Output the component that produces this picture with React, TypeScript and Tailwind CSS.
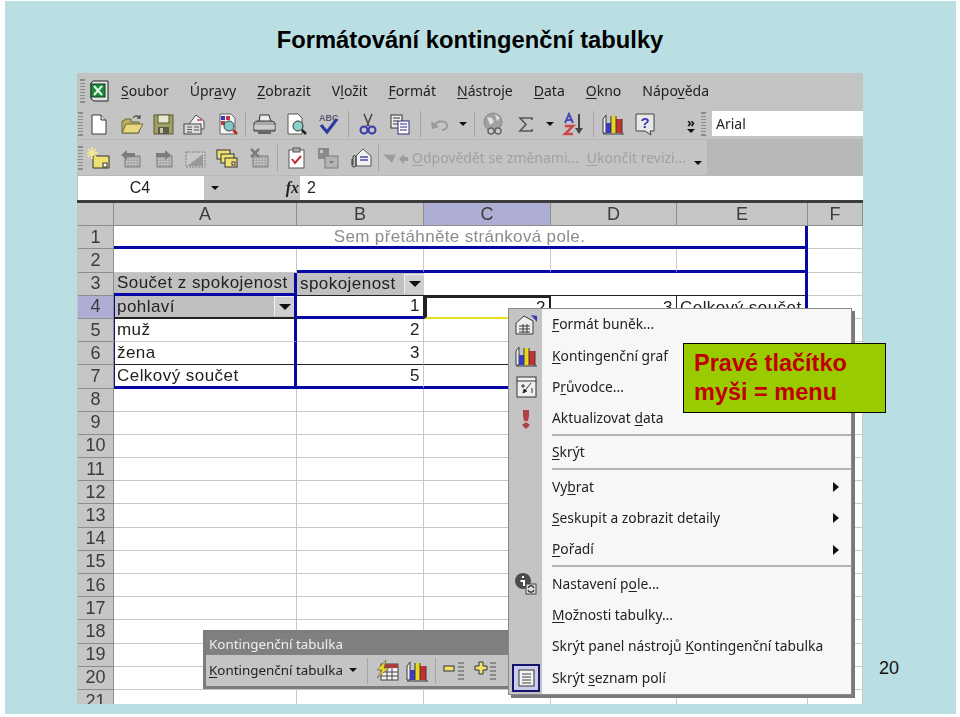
import React from 'react';

const OUT = '#3a3a3a';

// Text with an Alt-key letter: "&" marks the underlined character
function Hot({ text }: { text: string }) {
  const i = text.indexOf('&');
  if (i < 0) return <>{text}</>;
  return (
    <>
      {text.slice(0, i)}
      <u className="underline underline-offset-2">{text[i + 1]}</u>
      {text.slice(i + 2)}
    </>
  );
}

function Ico({ children }: { children: React.ReactNode }) {
  return (
    <svg width="24" height="24" viewBox="0 0 24 24" className="shrink-0">
      {children}
    </svg>
  );
}

const Hatch = () => (
  <>
    <rect x="6" y="10" width="15" height="11" fill="#a8a8a8" stroke="#808080" />
    <path d="M7 13h13M7 15.500h13M7 18h13" stroke="#e0e0e0" strokeDasharray="1.500 1.500" />
  </>
);

const ChartIco = () => (
  <Ico>
    <path d="M2 21V7l3-4v18zM2 22h21" fill="#eee" stroke={OUT} />
    <rect x="5" y="11" width="5" height="10" fill="#3a3ac8" />
    <rect x="10" y="4" width="5" height="17" fill="#e8d820" />
    <rect x="15" y="7" width="6" height="14" fill="#c83030" />
    <path d="M10 4v17M15 4v17M21 7v15" stroke={OUT} />
  </Ico>
);

const icons: Record<string, React.ReactNode> = {
  xls: (
    <Ico>
      <path d="M5 2h15v20H6l-3-2V4z" fill="#e4e4e4" stroke="#202020" />
      <rect x="3" y="5" width="14" height="13" fill="#1a8a3a" stroke="#104020" />
      <path d="M6 7l8 9M14 7l-8 9" stroke="#e8f8e8" strokeWidth="2" />
    </Ico>
  ),
  new: (
    <Ico>
      <path d="M5 3h9l5 5v14H5z" fill="#fff" stroke={OUT} />
      <path d="M14 3v5h5" fill="#ddd" stroke={OUT} />
    </Ico>
  ),
  open: (
    <Ico>
      <path d="M3 21V9h2l1-2h6v3h8v11z" fill="#bcae5a" stroke="#6a6a3a" />
      <path d="M3 21l4-9h17l-5 9z" fill="#e8d880" stroke="#6a6a3a" />
      <path d="M14 6c2-3 5-3 7 0M21 3v3h-3" fill="none" stroke="#555" strokeWidth="1.300" />
    </Ico>
  ),
  save: (
    <Ico>
      <rect x="3" y="3" width="19" height="19" fill="#a0a060" stroke="#5a5a3a" />
      <rect x="7" y="3" width="11" height="8" fill="#e8e8d0" stroke="#5a5a3a" />
      <rect x="7" y="15" width="11" height="7" fill="#5c5c48" />
      <rect x="9" y="16" width="3" height="5" fill="#c8c8a8" />
    </Ico>
  ),
  mail: (
    <Ico>
      <path d="M6 12l7-9 8 6v8H8z" fill="#f0f0f0" stroke="#555" />
      <path d="M14 8h5" stroke="#c04848" strokeWidth="1.500" />
      <rect x="1" y="12" width="17" height="10" fill="#dcdcdc" stroke="#444" />
      <path d="M4 15h5M4 17.500h5M4 20h5M11 15h5M11 18h5" stroke="#555" />
    </Ico>
  ),
  perm: (
    <Ico>
      <path d="M5 2h11l4 4v16H5z" fill="#f4f4f4" stroke="#666" />
      <rect x="6" y="4" width="4" height="4" fill="#3a3ab8" />
      <rect x="11" y="4" width="4" height="4" fill="#b83a3a" />
      <rect x="6" y="9" width="4" height="4" fill="#b83a3a" />
      <circle cx="14" cy="14" r="5" fill="#80c8c8" stroke="#444" />
      <path d="M18 18l4 4" stroke="#c02020" strokeWidth="2.500" />
    </Ico>
  ),
  print: (
    <Ico>
      <path d="M8 3h9l2 7H7z" fill="#ececec" stroke="#333" />
      <path d="M2 11q1-2 4-2h13q3 0 4 2v8H2z" fill="#a8a8a8" stroke="#333" />
      <path d="M2 14h21M2 16h21" stroke="#f0f0f0" />
      <path d="M6 19h13v3H6z" fill="#666" />
    </Ico>
  ),
  preview: (
    <Ico>
      <path d="M4 2h10l4 4v16H4z" fill="#fff" stroke="#555" />
      <circle cx="14" cy="14" r="5" fill="#8ad0c8" stroke="#333" />
      <path d="M18 18l4 4" stroke="#222" strokeWidth="2.500" />
    </Ico>
  ),
  spell: (
    <Ico>
      <text x="3" y="9" fontFamily="Liberation Sans, sans-serif" fontSize="9" fontWeight="700" fill="#5a5a70">ABC</text>
      <path d="M5 13l6 7L21 7" fill="none" stroke="#2a3aa0" strokeWidth="3" />
    </Ico>
  ),
  cut: (
    <Ico>
      <path d="M8 2l5 12M16 2l-5 12" stroke="#444" strokeWidth="1.500" />
      <circle cx="8" cy="18" r="3.500" fill="none" stroke="#3a3aa8" strokeWidth="2" />
      <circle cx="16" cy="18" r="3.500" fill="none" stroke="#3a3aa8" strokeWidth="2" />
    </Ico>
  ),
  copy: (
    <Ico>
      <rect x="3" y="3" width="11" height="13" fill="#eee" stroke="#333" />
      <path d="M5 6h7M5 9h5M5 12h5" stroke="#333" />
      <rect x="10" y="9" width="11" height="13" fill="#fff" stroke="#2a2a80" />
      <path d="M12 12h7M12 15h7M12 18h7" stroke="#2a2a80" />
    </Ico>
  ),
  undo: (
    <Ico>
      <path d="M7 13c3-5 12-5 12 1 0 2-2 4-5 4" fill="none" stroke="#9a9a9a" strokeWidth="2" />
      <path d="M3 9l1 8 7-2z" fill="#9a9a9a" />
    </Ico>
  ),
  globe: (
    <Ico>
      <circle cx="11" cy="10" r="9" fill="#a0a0a0" stroke="#888" />
      <path d="M5 5l5 1 2 4-4 3zM13 2l5 4-3 3z" fill="#e0e0e0" />
      <path d="M6 19a3 3 0 016 0 3 3 0 01-6 0zM13 19a3 3 0 016 0 3 3 0 01-6 0z" fill="#ccc" stroke="#666" strokeWidth="1.500" />
    </Ico>
  ),
  sum: (
    <Ico>
      <path d="M18 8V6H6l6 6.500L6 19h12v-2" fill="none" stroke="#555" strokeWidth="1.600" />
    </Ico>
  ),
  sort: (
    <Ico>
      <path d="M4 11l4-9 4 9M5.500 8h5" fill="none" stroke="#4a4ab8" strokeWidth="2" />
      <path d="M4 14h8l-8 8h8" fill="none" stroke="#c84848" strokeWidth="2.500" />
      <path d="M18 2v16" stroke="#444" strokeWidth="2" />
      <path d="M14 16h8l-4 6z" fill="#444" />
    </Ico>
  ),
  chart: <ChartIco />,
  help: (
    <Ico>
      <path d="M3 2h18v17h-4l1 4-6-4H3z" fill="#e8e8e8" stroke="#444" />
      <text x="12" y="16" textAnchor="middle" fontFamily="Liberation Sans, sans-serif" fontSize="15" fontWeight="700" fill="#3a3ab0">?</text>
    </Ico>
  ),
  spark: (
    <Ico>
      <path d="M6 10h16v12H6z" fill="#f0e070" stroke="#333" />
      <path d="M5 1v12M-1 7h12M1 3l8 8M9 3l-8 8" stroke="#f4ec90" strokeWidth="1.500" />
      <rect x="16" y="17" width="4" height="4" fill="#fff" stroke="#333" />
    </Ico>
  ),
  back: (
    <Ico>
      <Hatch />
      <path d="M2 9l6-5v3h8v4H8v3z" fill="#7c7c7c" />
    </Ico>
  ),
  next: (
    <Ico>
      <Hatch />
      <path d="M20 9l-6-5v3H5v4h9v3z" fill="#7c7c7c" />
    </Ico>
  ),
  slope: (
    <Ico>
      <rect x="3" y="6" width="19" height="15" fill="#c8c8c8" stroke="#808080" strokeDasharray="2 1" />
      <path d="M4 20L20 8v12z" fill="#9a9a9a" />
    </Ico>
  ),
  cards: (
    <Ico>
      <rect x="2" y="4" width="13" height="9" fill="#f0e070" stroke="#333" />
      <rect x="6" y="8" width="13" height="9" fill="#f0e070" stroke="#333" />
      <rect x="10" y="12" width="12" height="9" fill="#f0e070" stroke="#333" />
      <rect x="17" y="16" width="3" height="3" fill="#fff" stroke="#333" />
    </Ico>
  ),
  del: (
    <Ico>
      <Hatch />
      <path d="M4 3l8 8M12 3l-8 8" stroke="#7c7c7c" strokeWidth="2.500" />
    </Ico>
  ),
  clip: (
    <Ico>
      <rect x="5" y="4" width="15" height="18" fill="#fff" stroke="#555" />
      <rect x="9" y="2" width="7" height="4" fill="#aaa" stroke="#555" />
      <path d="M8 13l3 4 6-7" fill="none" stroke="#c03030" strokeWidth="2" />
    </Ico>
  ),
  wins: (
    <Ico>
      <rect x="2" y="2" width="11" height="11" fill="#8a8a8a" />
      <rect x="4" y="4" width="3" height="3" fill="#c8c8c8" />
      <rect x="9" y="10" width="13" height="12" fill="#b4b4b4" stroke="#7c7c7c" />
      <path d="M13 15h5l-2.500 3z" fill="#7c7c7c" />
    </Ico>
  ),
  mailclip: (
    <Ico>
      <path d="M8 10l7-7 8 7v10H8z" fill="#f0f0f0" stroke="#555" />
      <path d="M12 11h8M12 14h8" stroke="#4a4ab0" strokeWidth="1.500" />
      <path d="M4 13v6a2 2 0 004 0v-8a1.500 1.500 0 00-3 0v8" fill="none" stroke="#333" />
    </Ico>
  ),
  format: (
    <Ico>
      <path d="M2 10l8-7 9 5v13H2z" fill="#eee" stroke={OUT} />
      <path d="M5 13h11M5 16h11M5 19h11M9 11v9M13 11v9" stroke={OUT} />
      <path d="M17 2l6 1v6z" fill="#3a3ab0" />
    </Ico>
  ),
  wizard: (
    <Ico>
      <rect x="3" y="2" width="19" height="20" fill="#f0f0f0" stroke="#333" />
      <path d="M3 6h19" stroke="#333" />
      <path d="M9 9v4M7 11h4M17 8l-8 10M13 16l-4 2 1-4M18 13v5" stroke="#333" />
    </Ico>
  ),
  refresh: (
    <Ico>
      <path d="M9 3h6v6l-1 5h-4l-1-5z" fill="#b04048" />
      <path d="M12 15l4 3-4 4-4-4z" fill="#b04048" />
    </Ico>
  ),
  field: (
    <Ico>
      <circle cx="9" cy="9" r="8" fill="#4c4c4c" />
      <path d="M9 4v2M6.500 9H10v5" stroke="#fff" strokeWidth="2" fill="none" />
      <rect x="12" y="12" width="10" height="10" fill="#ddd" stroke="#444" />
      <path d="M14 16c1-3 5-3 6 0M20 18c-1 3-5 3-6 0" stroke="#333" strokeWidth="1.300" fill="none" />
    </Ico>
  ),
  list: (
    <Ico>
      <rect x="5" y="4" width="15" height="16" fill="#f4f4f4" stroke="#333" />
      <path d="M8 8h9M8 11h9M8 14h9M8 17h9" stroke="#444" />
    </Ico>
  ),
  bolt: (
    <Ico>
      <rect x="6" y="5" width="17" height="16" fill="#f4f4f4" stroke="#444" />
      <rect x="6" y="5" width="17" height="4" fill="#a84040" />
      <path d="M6 13h17M6 17h17M12 9v12M17 9v12" stroke="#444" />
      <path d="M11 1L2 11h5l-5 8 12-10H9z" fill="#e8d820" stroke="#555" strokeWidth=".6" />
    </Ico>
  ),
  minus: (
    <Ico>
      <rect x="2" y="7" width="10" height="5" fill="#f0e070" stroke="#333" />
      <path d="M16 4h6M16 8h6M16 12h6M16 16h6M16 20h6" stroke="#777" strokeWidth="1.500" />
    </Ico>
  ),
  plus: (
    <Ico>
      <path d="M5 3h4v4h4v4H9v4H5v-4H1V7h4z" fill="#f0e070" stroke="#333" />
      <path d="M16 4h6M16 8h6M16 12h6M16 16h6M16 20h6" stroke="#777" strokeWidth="1.500" />
    </Ico>
  ),
};

const Btn = ({ name }: { name: string }) => (
  <div className="w-8 h-6 flex items-center justify-center">{icons[name]}</div>
);
const Sep = ({ wide }: { wide?: boolean }) => (
  <div className={`flex justify-center ${wide ? 'w-[8px]' : 'w-[5px]'}`}>
    <div className="w-px h-[26px] bg-[#a4a4a4]" />
  </div>
);
const Grip = () => (
  <div className="w-[5px] h-[24px] shrink-0 border-y border-transparent bg-[repeating-linear-gradient(#8c8c8c_0_1px,transparent_1px_3px)]" />
);
const Caret = () => <div className="w-0 h-0 border-x-[4px] border-x-transparent border-t-[4px] border-t-[#111]" />;

const menuBar = ['&Soubor', 'Úpr&avy', '&Zobrazit', 'V&ložit', '&Formát', '&Nástroje', '&Data', '&Okno', 'Nápo&věda'];
const tool1 = ['new', 'open', 'save', 'mail', 'perm', '|', 'print', 'preview', 'spell', '||', 'cut', 'copy', '||'];
const tool2 = ['spark', 'back', 'next', 'slope', 'cards', 'del', '|', 'clip', 'wins', 'mailclip', '|'];

const BLUE = 'border-[#0707a6]';
const uiFont = "font-['Noto_Sans',sans-serif]";

function FilterBtn() {
  return (
    <div className="w-[20px] h-[20px] ml-auto bg-[#cfcfcf] border-t border-l border-[#f0f0f0] flex items-center justify-center">
      <div className="w-0 h-0 border-x-[6px] border-x-transparent border-t-[6px] border-t-[#111]" />
    </div>
  );
}

function Head({ label, on }: { label: string; on?: boolean }) {
  return (
    <div className={`flex items-center justify-center border-r border-b border-[#8d8d8d] text-[18px] text-[#3c3c3c] ${on ? 'bg-[#aeaed4]' : 'bg-[#c6c6c6]'}`}>
      {label}
    </div>
  );
}

const c = 'border-r border-b border-[#c8c8c8]';
const cellText = 'flex items-center text-[17px] tracking-[0.45px] text-[#222] px-[3px] overflow-hidden whitespace-nowrap';

function Sheet() {
  const plain = Array.from({ length: 14 }, (_, i) => i + 8);
  return (
    <div className="grid grid-cols-[36px_183px_127px_127px_126px_131px_55px] auto-rows-[23.2px] bg-white font-['Liberation_Sans',sans-serif] ml-px">
      <Head label="" />
      <Head label="A" />
      <Head label="B" />
      <Head label="C" on />
      <Head label="D" />
      <Head label="E" />
      <Head label="F" />

      <Head label="1" />
      <div className={`col-span-5 flex items-center justify-center text-[17px] tracking-[0.35px] text-[#8c8c8c] border-b-[3px] border-r-[3px] ${BLUE}`}>
        Sem přetáhněte stránková pole.
      </div>
      <div className={c} />

      <Head label="2" />
      <div className={c} />
      <div className={`${c} border-b-[3px] !border-b-[#0707a6]`} />
      <div className={`${c} border-b-[3px] !border-b-[#0707a6]`} />
      <div className={`${c} border-b-[3px] !border-b-[#0707a6]`} />
      <div className={`border-b-[3px] border-r-[3px] ${BLUE}`} />
      <div className={c} />

      <Head label="3" />
      <div className={`${cellText} bg-[#c0c0c0] border-b-[3px] border-r-[3px] ${BLUE}`}>Součet z spokojenost</div>
      <div className={`${cellText} !pr-0 bg-[#c0c0c0] border-b border-[#222]`}>
        spokojenost
        <FilterBtn />
      </div>
      <div className="col-span-3 border-b border-[#222] border-r-[3px] !border-r-[#0707a6]" />
      <div className={c} />

      <Head label="4" on />
      <div className={`${cellText} !pr-0 !pl-[2px] bg-[#c0c0c0] border-b-2 border-b-[#222] border-r-[3px] border-r-[#0707a6] border-l border-l-[#0707a6]`}>
        pohlaví
        <FilterBtn />
      </div>
      <div className={`${cellText} justify-end border-b-[3px] border-r border-[#0707a6] !border-r-[#222]`}>1</div>
      <div className={`${cellText} justify-end border-t-2 border-t-[#222] border-l-[3px] border-l-[#222] border-r-2 border-r-[#222] border-b-2 border-b-[#e8e020]`}>2</div>
      <div className={`${cellText} justify-end border-r border-[#222]`}>3</div>
      <div className={`${cellText} border-r-[3px] ${BLUE}`}>Celkový součet</div>
      <div className={c} />

      {[
        ['5', 'muž', '2', false, false],
        ['6', 'žena', '3', true, false],
        ['7', 'Celkový součet', '5', false, true],
      ].map(([n, name, v, dark, last]) => (
        <React.Fragment key={n as string}>
          <Head label={n as string} />
          <div className={`${cellText} !pl-[2px] border-r-[3px] border-r-[#0707a6] border-l border-l-[#14146e] ${last ? 'border-b-[3px] border-b-[#0707a6]' : dark ? 'border-b border-b-[#222]' : 'border-b border-b-[#c8c8c8]'}`}>
            {name as string}
          </div>
          <div className={`${cellText} justify-end border-r border-r-[#c8c8c8] ${last ? 'border-b-[3px] border-b-[#0707a6]' : dark ? 'border-b border-b-[#222]' : 'border-b border-b-[#c8c8c8]'}`}>
            {v as string}
          </div>
          <div className={`${c} ${last ? 'border-b-[3px] !border-b-[#0707a6]' : dark ? '!border-b-[#222]' : ''}`} />
          <div className={c} />
          <div className={c} />
          <div className={c} />
        </React.Fragment>
      ))}

      {plain.map((n) => (
        <React.Fragment key={n}>
          <Head label={String(n)} />
          <div className={c} />
          <div className={c} />
          <div className={c} />
          <div className={c} />
          <div className={c} />
          <div className={c} />
        </React.Fragment>
      ))}
    </div>
  );
}

type Item = { label?: string; icon?: string; sub?: boolean; sep?: boolean; on?: boolean };
const items: Item[] = [
  { label: '&Formát buněk...', icon: 'format' },
  { label: '&Kontingenční graf', icon: 'chart' },
  { label: 'P&růvodce...', icon: 'wizard' },
  { label: 'Aktualizovat &data', icon: 'refresh' },
  { sep: true },
  { label: '&Skrýt' },
  { sep: true },
  { label: 'Vy&brat', sub: true },
  { label: '&Seskupit a zobrazit detaily', sub: true },
  { label: '&Pořadí', sub: true },
  { sep: true },
  { label: 'Nastavení p&ole...', icon: 'field' },
  { label: '&Možnosti tabulky…' },
  { label: 'Skrýt panel nástrojů &Kontingenční tabulka' },
  { label: 'Skrýt &seznam polí', icon: 'list', on: true },
];

function PivotMenu() {
  return (
    <div className={`absolute left-[431px] top-[235px] w-[344px] border border-[#8a8a8a] bg-[#f7f7f7] shadow-[3px_3px_0_#7a7a7a] ${uiFont} text-[13.8px] text-[#222]`}>
      {items.map((it, i) =>
        it.sep ? (
          <div key={i} className="flex h-[3px]">
            <div className="w-[33px] bg-[#c4c4c4]" />
            <div className="flex-1 ml-[10px] border-t-2 border-[#b4b4b4]" />
          </div>
        ) : (
          <div key={i} className="flex h-[31.3px] items-center">
            <div className="w-[33px] h-full bg-[#c4c4c4] flex items-center justify-center">
              {it.on ? (
                <div className="w-[28px] h-[28px] border-2 border-[#14146e] bg-[#ccccea] flex items-center justify-center">{icons[it.icon!]}</div>
              ) : (
                it.icon && icons[it.icon]
              )}
            </div>
            <div className="ml-[10px] flex-1 whitespace-nowrap"><Hot text={it.label!} /></div>
            {it.sub && <div className="mr-[12px] w-0 h-0 border-y-[5px] border-y-transparent border-l-[6px] border-l-[#111]" />}
          </div>
        ),
      )}
    </div>
  );
}

function PivotToolbar() {
  return (
    <div className={`absolute left-[126px] top-[557px] w-[320px] h-[59px] border-[3px] border-[#7c7c7c] bg-[#c4c4c4] ${uiFont} text-[13.4px] text-[#222]`}>
      <div className="h-[22px] bg-[#808080] text-[#eee] pl-[3px] leading-[22px]">Kontingenční tabulka</div>
      <div className="flex items-center h-[31px] pl-[3px]">
        <span className="w-[154px] flex items-center gap-[6px] whitespace-nowrap">
          <span><Hot text="&Kontingenční tabulka" /></span>
          <Caret />
        </span>
        <Sep wide />
        <Btn name="bolt" />
        <div className="-ml-[2px]"><Btn name="chart" /></div>
        <Sep />
        <Btn name="minus" />
        <Btn name="plus" />
      </div>
    </div>
  );
}

function ExcelShot() {
  return (
    <div className={`relative w-[786px] h-[631px] overflow-hidden bg-[#c4c4c4] blur-[0.4px] ${uiFont}`}>
      <div className="h-[35px] bg-[#c3c3c3] flex items-center pl-[3px] text-[14px] text-[#222]">
        <Grip />
        <div className="ml-[3px] w-[27px]">{icons.xls}</div>
        <div className="ml-[6px] flex gap-[21px]">
          {menuBar.map((m) => (
            <span key={m}><Hot text={m} /></span>
          ))}
        </div>
      </div>

      <div className="h-[31px] flex items-center bg-[#c4c4c4] pl-[1px]">
        <Grip />
        {tool1.map((n, i) => (n === '|' ? <Sep key={i} /> : n === '||' ? <Sep key={i} wide /> : <Btn key={i} name={n} />))}
        <Btn name="undo" />
        <div className="w-[14px] flex justify-center"><Caret /></div>
        <Sep wide />
        <Btn name="globe" />
        <Btn name="sum" />
        <div className="w-[15px] flex justify-center"><Caret /></div>
        <Btn name="sort" />
        <Sep wide />
        <Btn name="chart" />
        <Btn name="help" />
        <div className="w-[40px] pl-[26px] flex flex-col items-start leading-none">
          <span className="text-[13px] font-bold text-[#111] leading-[14px]">»</span>
          <Caret />
        </div>
        <Grip />
        <div className="ml-[6px] flex-1 h-[25px] bg-white pl-[4px] leading-[25px] text-[14px] text-[#222]">Arial</div>
      </div>

      <div className="h-[37px] bg-[#b8b8b8] flex items-start pt-[1px]">
        <div className="w-[630px] h-[35px] bg-[#c4c4c4] flex items-center pl-[1px] text-[14px] text-[#a0a0a0]">
          <Grip />
          {tool2.map((n, i) => (n === '|' ? <Sep key={i} /> : <Btn key={i} name={n} />))}
          <svg width="31" height="16" viewBox="0 0 31 16" className="shrink-0">
            <path d="M2 4l9 1 4-1-4 9zM18 9l5-5v3h4v4h-4v3z" fill="#9c9c9c" />
          </svg>
          <span className="whitespace-nowrap"><Hot text="&Odpovědět se změnami..." /></span>
          <span className="ml-[8px] whitespace-nowrap"><Hot text="&Ukončit revizi..." /></span>
          <span className="ml-[8px] mt-[10px]"><Caret /></span>
        </div>
      </div>

      <div className="h-[24px] flex items-stretch text-[#222]">
        <div className="ml-px w-[126px] bg-white text-center text-[16px] leading-[24px] font-['Liberation_Sans',sans-serif] pr-[2px]">C4</div>
        <div className="w-[20px] flex items-center justify-center ml-[1px]"><Caret /></div>
        <div className="w-[75px] text-right font-['Liberation_Serif',serif] italic font-bold text-[16px] leading-[24px] pr-[1px]">fx</div>
        <div className="flex-1 bg-white pl-[7px] text-[16px] leading-[24px] font-['Liberation_Sans',sans-serif]">2</div>
      </div>
      <div className="h-[3px] bg-[#3c3c3c]" />

      <Sheet />
      <PivotToolbar />
      <PivotMenu />
    </div>
  );
}

export default function App() {
  return (
    <div className="w-[960px] h-[717px] bg-white pt-px pl-[5px] pr-[4px] pb-[3px] font-['Liberation_Sans',sans-serif]">
      <div className="relative h-full bg-[#b9dfe3] flex">
        <div className="ml-[72px] w-[786px]">
          <h1 className="h-[72px] pt-[24px] text-center text-[23.75px] leading-[30px] font-bold text-black">
            Formátování kontingenční tabulky
          </h1>
          <ExcelShot />
        </div>
        <div className="self-end mb-[35px] ml-[16px] text-[18px] leading-[22px] text-[#111]">20</div>
        <div className="absolute left-[678px] top-[342px] w-[203px] h-[70px] bg-[#99cc00] border border-black pl-[10px] pt-[5px] text-[23.5px] leading-[29px] font-bold text-[#c00000]">
          Pravé tlačítko
          <br />
          myši = menu
        </div>
      </div>
    </div>
  );
}
